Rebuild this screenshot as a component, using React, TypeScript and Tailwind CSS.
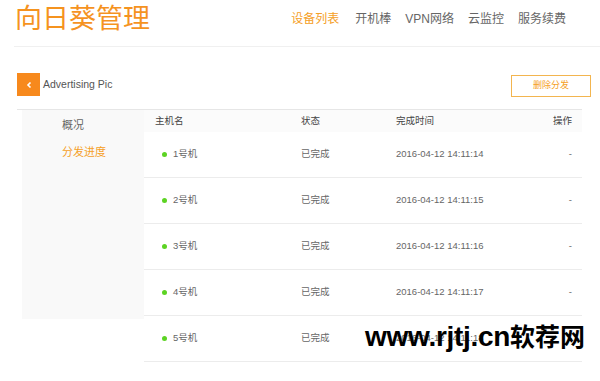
import React from "react";

const cjk = { fontFamily: '"Liberation Sans", "Noto Sans CJK SC", sans-serif' };

const rows = [
  { name: "1号机", time: "2016-04-12 14:11:14" },
  { name: "2号机", time: "2016-04-12 14:11:15" },
  { name: "3号机", time: "2016-04-12 14:11:16" },
  { name: "4号机", time: "2016-04-12 14:11:17" },
  { name: "5号机", time: "2016-04-12 14:11:18" },
];

export default function App() {
  return (
    <div className="relative w-[600px] h-[381px] overflow-hidden bg-white" style={cjk}>
      {/* header */}
      <div className="ml-[14px] h-[47px] border-b border-[#f0f0f0] flex items-start">
        <div className="ml-[1px] pt-[3px] text-[27px] leading-[32px] text-[#f5931f]">向日葵管理</div>
        <div className="ml-auto mr-[34px] pt-[11px] flex gap-[14px] text-[12px] leading-[16px] text-[#666]">
          <span className="text-[#f5a027]">设备列表</span>
          <span className="ml-[2px]">开机棒</span>
          <span>VPN网络</span>
          <span>云监控</span>
          <span>服务续费</span>
        </div>
      </div>

      {/* toolbar */}
      <div className="mt-[26px] ml-[17px] mr-[9px] flex items-center h-[23px]">
        <div className="w-[23px] h-[23px] bg-[#f7891d] flex items-center justify-center">
          <svg width="8" height="8" viewBox="0 0 8 8">
            <path d="M5.5 1.5 L3 4 L5.5 6.5" stroke="white" strokeWidth="1.6" fill="none" />
          </svg>
        </div>
        <span className="ml-[3px] text-[10.5px] text-[#555]">Advertising Pic</span>
        <div className="ml-auto mt-[2px] w-[80px] h-[22px] border border-[#f3b54f] flex items-center justify-center text-[9px] text-[#f5a027]">
          删除分发
        </div>
      </div>

      {/* content */}
      <div className="mt-[13px] ml-[17px] w-[565px] border-t border-[#e6e6e6] flex">
        <div className="ml-[5px] w-[122px] h-[209px] bg-[#f9f9f9] pl-[40px] pt-[8px] text-[11px] leading-[14px]">
          <div className="text-[#666]">概况</div>
          <div className="mt-[13px] text-[#f5a027]">分发进度</div>
        </div>
        <div className="w-[438px] text-[9.5px] text-[#666]">
          <div className="h-[22px] bg-[#fbfbfb] flex items-center text-[#444]">
            <span className="ml-[11px] w-[146px]">主机名</span>
            <span className="w-[95px]">状态</span>
            <span>完成时间</span>
            <span className="ml-auto mr-[10px]">操作</span>
          </div>
          {rows.map((r) => (
            <div key={r.name} className="h-[46px] border-b border-[#ececec] flex items-center">
              <span className="ml-[18px] w-[5px] h-[5px] rounded-full bg-[#5cd323]" />
              <span className="ml-[6px] w-[128px]">{r.name}</span>
              <span className="w-[95px]">已完成</span>
              <span>{r.time}</span>
              <span className="ml-auto mr-[10px]">-</span>
            </div>
          ))}
        </div>
      </div>

      {/* watermark */}
      <div className="absolute left-[365px] top-[318px] flex items-baseline font-bold text-black leading-[34px]">
        <span className="text-[28px] tracking-[-0.3px]" style={{ fontFamily: '"Liberation Sans", sans-serif' }}>www.rjtj.cn</span>
        <span className="text-[25px]" style={{ fontFamily: '"Noto Sans CJK SC", sans-serif' }}>软荐网</span>
      </div>
    </div>
  );
}
